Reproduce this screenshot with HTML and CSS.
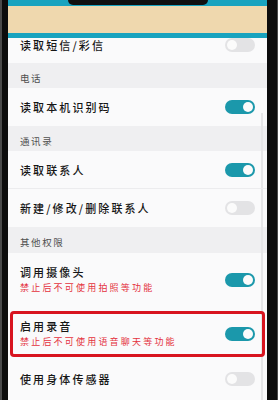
FILE: index.html
```html
<!DOCTYPE html>
<html lang="zh">
<head>
<meta charset="utf-8">
<link rel="stylesheet" href="styles.css">
</head>
<body>
<div class="phone">
  <div class="screen">
    <div class="notch"></div>
    <div class="topbar"></div>
    <div class="banner"></div>
    <div class="bar2"></div>
    <div class="list">
      <div class="scrollbar"></div>
      <div class="row first"><span class="label">读取短信/彩信</span><span class="toggle"></span></div>
      <div class="section">电话</div>
      <div class="row"><span class="label">读取本机识别码</span><span class="toggle on"></span></div>
      <div class="section">通讯录</div>
      <div class="row sep"><span class="label">读取联系人</span><span class="toggle on"></span></div>
      <div class="row"><span class="label">新建/修改/删除联系人</span><span class="toggle"></span></div>
      <div class="section tall">其他权限</div>
      <div class="row double a">
        <div class="texts"><span class="label">调用摄像头</span><span class="sub">禁止后不可使用拍照等功能</span></div>
        <span class="toggle on"></span>
      </div>
      <div class="row double b highlight">
        <div class="texts"><span class="label">启用录音</span><span class="sub">禁止后不可使用语音聊天等功能</span></div>
        <span class="toggle on"></span>
      </div>
      <div class="row last"><span class="label">使用身体传感器</span><span class="toggle"></span></div>
    </div>
  </div>
</div>
</body>
</html>
```
FILE: styles.css
```css
html, body {
  margin: 0;
  padding: 0;
}
body {
  width: 278px;
  height: 400px;
  overflow: hidden;
  background: #3a3a3a;
  font-family: "Noto Sans CJK SC", "Noto Sans", sans-serif;
}
.phone {
  width: 278px;
  height: 400px;
  padding-left: 1px;
  box-sizing: border-box;
  background: #4a4a4a;
}
.phone .screen {
  position: relative;
  margin-left: 7px;
  width: 259px;
  height: 400px;
  background: #fafafb;
  box-shadow: -6px 0 0 #0c0c0c, 10px 0 0 #0c0c0c;
  overflow: hidden;
  display: flex;
  flex-direction: column;
}
.notch {
  position: absolute;
  left: 60px;
  top: 0;
  width: 140px;
  height: 5px;
  background: #101010;
  border-radius: 0 0 8px 8px;
  z-index: 3;
}
.topbar {
  height: 6px;
  background: #18a3bf;
  flex: none;
}
.banner {
  height: 27px;
  background: #efd8ae;
  flex: none;
}
.bar2 {
  height: 5px;
  background: #18a3bf;
  flex: none;
  position: relative;
  z-index: 2;
}
.list {
  position: relative;
  flex: 1;
  display: flex;
  flex-direction: column;
}
.scrollbar {
  position: absolute;
  right: 4px;
  top: 75px;
  bottom: 0;
  width: 2px;
  background: #e6e6e8;
}
.row {
  display: flex;
  align-items: center;
  justify-content: space-between;
  height: 38px;
  padding: 0 12px 0 12px;
  flex: none;
  position: relative;
}
.row.first {
  margin-top: -12px;
  height: 38px;
}
.row.first + .section {
  margin-top: -1px;
}
.row.sep {
  border-bottom: 1px solid #ececee;
  height: 37px;
}
.row.double.a {
  height: 54px;
}
.row.double.b {
  height: 53px;
}
.row.last {
  height: 38px;
}
.label {
  font-size: 11px;
  font-weight: 500;
  letter-spacing: 2.1px;
  color: #161616;
  line-height: 16px;
}
.texts {
  display: flex;
  flex-direction: column;
}
.sub {
  font-size: 9px;
  letter-spacing: 2.2px;
  color: #e4323e;
  line-height: 16px;
}
.section {
  height: 25px;
  display: flex;
  align-items: center;
  padding: 4px 12px 0;
  box-sizing: border-box;
  background: #efeff1;
  font-size: 9.5px;
  letter-spacing: 1.6px;
  color: #505050;
  flex: none;
}
.section.tall {
  height: 26px;
}
.toggle {
  position: relative;
  width: 30px;
  height: 14px;
  border-radius: 7px;
  background: #e3e3e5;
  flex: none;
}
.toggle::after {
  content: "";
  position: absolute;
  top: 2px;
  left: 2px;
  width: 10px;
  height: 10px;
  border-radius: 50%;
  background: #fbfbfb;
}
.toggle.on {
  background: #1b98ab;
}
.toggle.on::after {
  left: 18px;
}
.highlight::after {
  content: "";
  position: absolute;
  left: 2px;
  right: 2px;
  top: 4px;
  bottom: 3px;
  border: 3px solid #d8141f;
  border-radius: 4px;
  pointer-events: none;
}
```
